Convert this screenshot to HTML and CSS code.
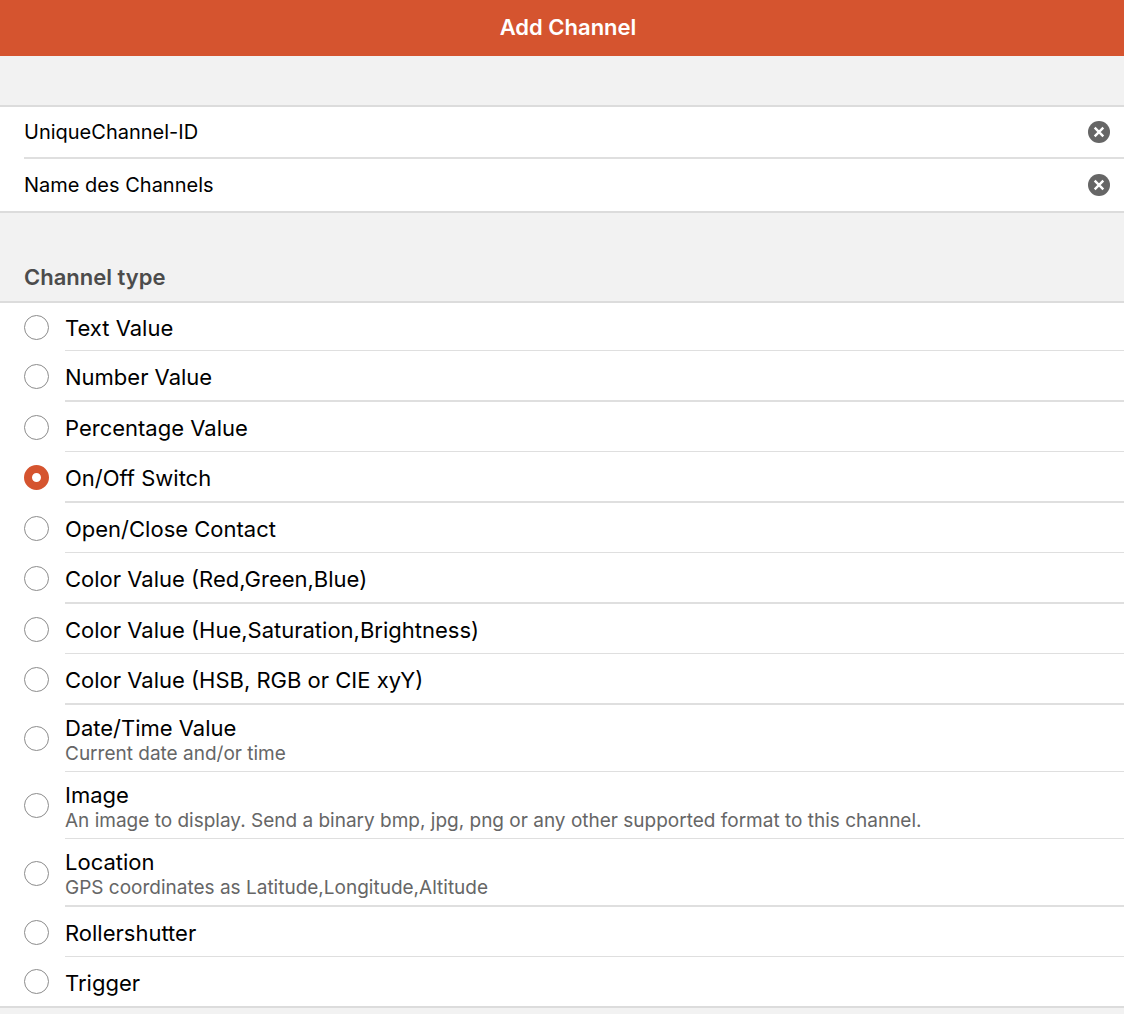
FILE: index.html
```html
<!DOCTYPE html>
<html lang="en">
<head>
<meta charset="utf-8">
<meta name="viewport" content="width=device-width, initial-scale=1">
<title>Add Channel</title>
<link rel="stylesheet" href="styles.css">
</head>
<body>
<header class="navbar"><h1 class="navbar-title">Add Channel</h1></header>
<main>
<form>
  <div class="fields">
    <div class="field">
      <input class="field-input" type="text" aria-label="Channel ID" value="UniqueChannel-ID">
      <button class="clear" type="button" aria-label="Clear channel ID"><svg viewBox="0 0 22 22" aria-hidden="true"><circle cx="11" cy="11" r="11"/><path d="M6.7 6.7l8.6 8.6M15.3 6.7l-8.6 8.6"/></svg></button>
    </div>
    <div class="field">
      <input class="field-input" type="text" aria-label="Channel name" value="Name des Channels">
      <button class="clear" type="button" aria-label="Clear channel name"><svg viewBox="0 0 22 22" aria-hidden="true"><circle cx="11" cy="11" r="11"/><path d="M6.7 6.7l8.6 8.6M15.3 6.7l-8.6 8.6"/></svg></button>
    </div>
  </div>
  <h2 class="section-title" id="type-title">Channel type</h2>
  <div class="options" role="radiogroup" aria-labelledby="type-title">
    <label class="option"><input class="radio" type="radio" name="type"><span class="option-text">Text Value</span></label>
    <label class="option strong"><input class="radio" type="radio" name="type"><span class="option-text">Number Value</span></label>
    <label class="option"><input class="radio" type="radio" name="type"><span class="option-text">Percentage Value</span></label>
    <label class="option strong"><input class="radio" type="radio" name="type" checked><span class="option-text">On/Off Switch</span></label>
    <label class="option"><input class="radio" type="radio" name="type"><span class="option-text">Open/Close Contact</span></label>
    <label class="option strong"><input class="radio" type="radio" name="type"><span class="option-text">Color Value (Red,Green,Blue)</span></label>
    <label class="option"><input class="radio" type="radio" name="type"><span class="option-text">Color Value (Hue,Saturation,Brightness)</span></label>
    <label class="option strong"><input class="radio" type="radio" name="type"><span class="option-text">Color Value (HSB, RGB or CIE xyY)</span></label>
    <label class="option tall"><input class="radio" type="radio" name="type"><span class="option-text">Date/Time Value<small class="note">Current date and/or time</small></span></label>
    <label class="option tall"><input class="radio" type="radio" name="type"><span class="option-text">Image<small class="note">An image to display. Send a binary bmp, jpg, png or any other supported format to this channel.</small></span></label>
    <label class="option tall strong"><input class="radio" type="radio" name="type"><span class="option-text">Location<small class="note">GPS coordinates as Latitude,Longitude,Altitude</small></span></label>
    <label class="option"><input class="radio" type="radio" name="type"><span class="option-text">Rollershutter</span></label>
    <label class="option"><input class="radio" type="radio" name="type"><span class="option-text">Trigger</span></label>
  </div>
</form>
</main>
</body>
</html>
```
FILE: styles.css
```css
* {
  box-sizing: border-box;
}

body {
  margin: 0;
  background: #f2f2f2;
  color: #000;
  font-family: Inter, "Liberation Sans", sans-serif;
  font-size: 22px;
  line-height: 26px;
}

.navbar {
  display: flex;
  align-items: center;
  justify-content: center;
  height: 56px;
  padding-left: 12px;
  background: #d5542f;
  color: #fff;
}

.navbar-title {
  margin: 0;
  padding-bottom: 2px;
  font-size: 22px;
  font-weight: 600;
}

.fields {
  margin-top: 49px;
  padding-left: 24px;
  border: solid #dcdcdc;
  border-width: 2px 0;
  background: #fff;
}

.field {
  display: flex;
  align-items: center;
  height: 50px;
  padding-right: 14px;
}

.field + .field {
  border-top: 2px solid #dfdfdf;
  height: 54px;
}

.field-input {
  flex: 1;
  min-width: 0;
  height: 50px;
  padding: 0;
  border: 0;
  outline: 0;
  background: transparent;
  color: inherit;
  font: inherit;
  font-size: 20px;
}

.clear {
  width: 22px;
  height: 22px;
  padding: 0;
  border: 0;
  background: none;
}

.clear svg {
  display: block;
  fill: #666;
}

.clear path {
  stroke: #fff;
  stroke-width: 2.4;
}

.section-title {
  margin: 0;
  padding: 51px 24px 11px;
  color: #4c4c4c;
  font-size: 22px;
  font-weight: 600;
}

.options {
  border: solid #dcdcdc;
  border-width: 2px 0;
  background: #fff;
}

.option {
  display: flex;
  align-items: stretch;
  padding-left: 24px;
}

.radio {
  appearance: none;
  flex: none;
  align-self: center;
  width: 25px;
  height: 25px;
  margin: 0 16px 0 0;
  border: 1px solid #8c8c8c;
  border-radius: 50%;
  background: #fff;
}

.radio:checked {
  border: 8px solid #d5542f;
}

.option-text {
  display: flex;
  flex: 1;
  flex-direction: column;
  justify-content: center;
  min-height: 50px;
  padding-top: 2px;
  border-bottom: 1px solid #dfdfdf;
}

.option:first-child .option-text {
  min-height: 48px;
}

.strong .option-text {
  min-height: 51px;
  border-bottom-width: 2px;
}

.tall .option-text {
  min-height: 67px;
  padding-top: 4px;
}

.tall.strong .option-text {
  min-height: 68px;
}

.option:last-child .option-text {
  min-height: 49px;
  border-bottom: 0;
}

.note {
  color: #666;
  font-size: 19px;
  line-height: 25px;
}
```
